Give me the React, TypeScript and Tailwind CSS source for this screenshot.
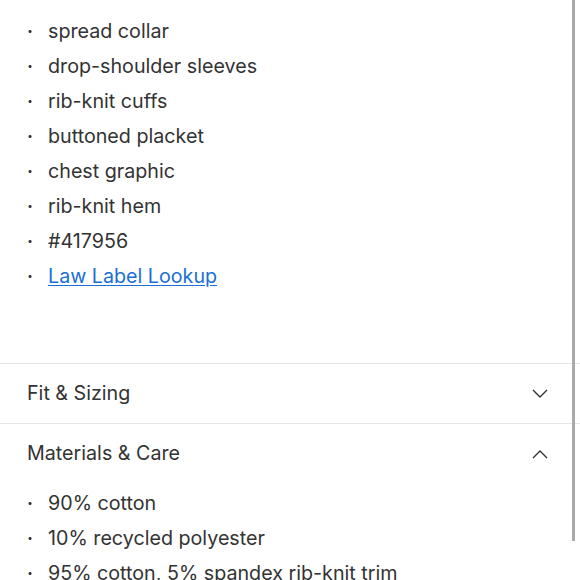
const details = [
  "spread collar",
  "drop-shoulder sleeves",
  "rib-knit cuffs",
  "buttoned placket",
  "chest graphic",
  "rib-knit hem",
  "#417956",
];

const materials = [
  "90% cotton",
  "10% recycled polyester",
  "95% cotton, 5% spandex rib-knit trim",
];

function Bullet({ children }: { children: React.ReactNode }) {
  return (
    <li className="flex items-center h-[35px]">
      <span className="w-[21px] pl-[0px] text-[#333] text-[18px] font-bold leading-none">·</span>
      <span>{children}</span>
    </li>
  );
}

function Chevron({ up }: { up?: boolean }) {
  return (
    <svg width="18" height="10" viewBox="0 0 18 10" fill="none" className="mr-[31px]">
      <path
        d={up ? "M2 9 L9 2 L16 9" : "M2 1 L9 8 L16 1"}
        stroke="#333"
        strokeWidth="1.4"
      />
    </svg>
  );
}

export default function App() {
  return (
    <div
      className="relative w-[580px] h-[580px] overflow-hidden bg-white text-[#333] text-[19.7px]"
      style={{ fontFamily: "Inter, 'Noto Sans', sans-serif" }}
    >
      <ul className="pt-[14px] pl-[27px] pb-[69px]">
        {details.map((d) => (
          <Bullet key={d}>{d}</Bullet>
        ))}
        <Bullet>
          <a href="#" className="text-[#1a6fd6] underline underline-offset-2">
            Law Label Lookup
          </a>
        </Bullet>
      </ul>

      <div className="border-t border-[#e5e5e5] h-[60px] flex items-center justify-between pl-[27px]">
        <span>Fit &amp; Sizing</span>
        <Chevron />
      </div>
      <div className="border-t border-[#e5e5e5] h-[60px] flex items-center justify-between pl-[27px]">
        <span>Materials &amp; Care</span>
        <Chevron up />
      </div>

      <ul className="pt-[3px] pl-[27px]">
        {materials.map((m) => (
          <Bullet key={m}>{m}</Bullet>
        ))}
      </ul>

      <div className="absolute right-[5px] top-0 w-[3px] h-[541px] bg-[#aaa]" />
    </div>
  );
}
